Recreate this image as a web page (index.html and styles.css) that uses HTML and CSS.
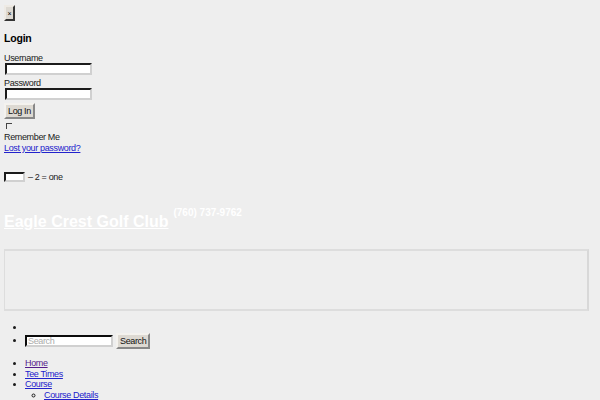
FILE: index.html
```html
<!DOCTYPE html>
<html>
<head>
<meta charset="utf-8">
<link rel="stylesheet" href="styles.css">
</head>
<body>
<button class="close">×</button>
<h3 class="login-title">Login</h3>
<form class="login-form">
  <label class="lbl">Username</label>
  <input class="field" type="text">
  <label class="lbl">Password</label>
  <input class="field" type="password">
  <button class="btn" type="button">Log In</button>
  <input class="check" type="checkbox">
  <label class="lbl">Remember Me</label>
  <a class="link" href="#">Lost your password?</a>
</form>
<p class="captcha"><input class="small-field" type="text"> – 2 = one</p>
<div class="header">
  <a class="site-title" href="#">Eagle Crest Golf Club</a>
  <span class="phone">(760) 737-9762</span>
</div>
<div class="banner"></div>
<ul class="tools">
  <li></li>
  <li class="search-row"><input class="search" type="text" placeholder="Search"><button class="btn search-btn" type="button">Search</button></li>
</ul>
<ul class="nav">
  <li><a class="visited" href="#">Home</a></li>
  <li><a href="#">Tee Times</a></li>
  <li><a href="#">Course</a>
    <ul class="sub">
      <li><a href="#">Course Details</a></li>
    </ul>
  </li>
</ul>
</body>
</html>
```
FILE: styles.css
```css
html { background: #eeeeee; }
body {
  margin: 4px;
  font-family: "Liberation Sans", Arial, sans-serif;
  font-size: 9px;
  letter-spacing: -0.35px;
  color: #1a1a1a;
  background: #eeeeee;
}
.close {
  display: block;
  width: 11px;
  height: 16px;
  margin: 1px 0 0 0;
  padding: 0;
  font-size: 7px;
  letter-spacing: 0;
  font-family: "Liberation Sans", Arial, sans-serif;
  background: #ddd9d2;
  border: 2px outset #eeeae4;
  border-right-color: #888;
  border-bottom-color: #888;
}
.login-title {
  font-size: 10.5px;
  letter-spacing: -0.2px;
  font-weight: bold;
  margin: 11px 0 9px 0;
  color: #000;
}
.login-form {
  display: flex;
  flex-direction: column;
  align-items: flex-start;
}
.lbl { display: block; line-height: 10px; }
.field {
  width: 83px;
  height: 8px;
  margin: 0 0 3px 1px;
  padding: 0;
  border: 2px inset #d0d0d0;
  border-top-color: #707070;
  border-left-color: #707070;
  background: #fff;
}
.btn {
  font-family: "Liberation Sans", Arial, sans-serif;
  font-size: 9px;
  letter-spacing: -0.35px;
  color: #111;
  background: #ddd9d2;
  border: 2px solid #888;
  border-top-color: #f4f2ee;
  border-left-color: #f4f2ee;
  padding: 1px 2px;
  height: 16px;
  margin: 0;
}
.check {
  width: 6px;
  height: 6px;
  margin: 4px 0 3px 2px;
  appearance: none;
  border-left: 1px solid #444;
  border-top: 1px solid #444;
  background: transparent;
}
.link { color: #2222cc; line-height: 12px; }
.captcha { margin: 18px 0 0 0; display: flex; align-items: center; gap: 3px; }
.small-field {
  width: 17px;
  height: 6px;
  padding: 0;
  margin: 0;
  border: 2px inset #d0d0d0;
  border-top-color: #707070;
  border-left-color: #707070;
  background: #fff;
}
.header { margin-top: 21px; display: flex; align-items: flex-start; gap: 5px; height: 32px; letter-spacing: 0; }
.site-title {
  color: #fff;
  font-size: 16px;
  font-weight: bold;
  margin-top: 10px;
}
.phone { color: #fff; font-weight: bold; font-size: 10px; margin-top: 4px; }
.banner {
  height: 58px;
  margin: 14px 7px 0 -1px;
  border: 2px solid #dddddd;
  border-right-color: #d8d8d8;
}
.tools { margin: 11px 0 0 0; padding-left: 21px; }
.tools li { height: 11px; }
.tools .search-row { height: 18px; }
.search {
  width: 83px;
  height: 8px;
  padding: 0 0 0 1px;
  margin: 0 3px 0 0;
  font-size: 9px;
  letter-spacing: -0.35px;
  font-family: "Liberation Sans", Arial, sans-serif;
  border: 2px inset #d0d0d0;
  border-top-color: #606060;
  border-left-color: #606060;
  background: #fff;
  vertical-align: middle;
}
.search::placeholder { color: #aaa; }
.search-btn { vertical-align: middle; }
.nav { margin: 7px 0 0 0; padding-left: 21px; line-height: 10.5px; }
.nav a { color: #2222cc; }
.nav a.visited { color: #551a8b; }
.sub { list-style: circle; padding-left: 19px; margin: 0; }
```
